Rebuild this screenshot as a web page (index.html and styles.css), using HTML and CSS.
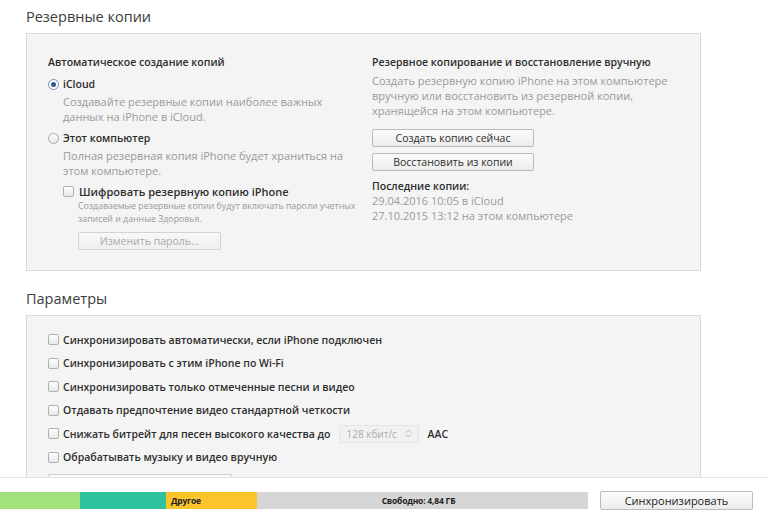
FILE: index.html
```html
<!DOCTYPE html>
<html lang="ru">
<head>
<meta charset="utf-8">
<title>Резервные копии</title>
<link rel="stylesheet" href="styles.css">
</head>
<body>
<div class="main">
  <h2 class="section-title">Резервные копии</h2>
  <div class="panel panel-backup">
    <div class="col col-left">
      <div class="label strong">Автоматическое создание копий</div>
      <div class="opt-row"><span class="radio checked"></span><span class="strong">iCloud</span></div>
      <div class="desc indent">Создавайте резервные копии наиболее важных<br>данных на iPhone в iCloud.</div>
      <div class="opt-row row2"><span class="radio"></span><span class="strong">Этот компьютер</span></div>
      <div class="desc indent">Полная резервная копия iPhone будет храниться на<br>этом компьютере.</div>
      <div class="opt-row row3 indent"><span class="checkbox"></span><span class="strong big">Шифровать резервную копию iPhone</span></div>
      <div class="small-desc">Создаваемые резервные копии будут включать пароли учетных<br>записей и данные Здоровья.</div>
      <button class="btn btn-pass" disabled>Изменить пароль...</button>
    </div>
    <div class="col col-right">
      <div class="label strong">Резервное копирование и восстановление вручную</div>
      <div class="desc r-desc">Создать резервную копию iPhone на этом компьютере<br>вручную или восстановить из резервной копии,<br>хранящейся на этом компьютере.</div>
      <button class="btn btn-wide b1">Создать копию сейчас</button>
      <button class="btn btn-wide b2">Восстановить из копии</button>
      <div class="label strong last">Последние копии:</div>
      <div class="desc dates">29.04.2016 10:05 в iCloud<br>27.10.2015 13:12 на этом компьютере</div>
    </div>
  </div>

  <h2 class="section-title t2">Параметры</h2>
  <div class="panel panel-params">
    <div class="p-row"><span class="checkbox"></span><span class="strong">Синхронизировать автоматически, если iPhone подключен</span></div>
    <div class="p-row"><span class="checkbox"></span><span class="strong">Синхронизировать с этим iPhone по Wi-Fi</span></div>
    <div class="p-row"><span class="checkbox"></span><span class="strong">Синхронизировать только отмеченные песни и видео</span></div>
    <div class="p-row"><span class="checkbox"></span><span class="strong">Отдавать предпочтение видео стандартной четкости</span></div>
    <div class="p-row"><span class="checkbox"></span><span class="strong">Снижать битрейт для песен высокого качества до</span>
      <span class="select">128 кбит/с<svg class="updown" width="7" height="9" viewBox="0 0 7 9"><path d="M1 3.5 L3.5 1 L6 3.5 M1 5.5 L3.5 8 L6 5.5" fill="none" stroke="#b5b5b5" stroke-width="1"/></svg></span>
      <span class="strong aac">AAC</span></div>
    <div class="p-row"><span class="checkbox"></span><span class="strong">Обрабатывать музыку и видео вручную</span></div>
    <div class="p-row last-row"><button class="btn btn-reset">&nbsp;</button></div>
  </div>
</div>
<div class="footer">
  <div class="storage">
    <div class="seg seg-green"></div>
    <div class="seg seg-teal"></div>
    <div class="seg seg-yellow">Другое</div>
    <div class="seg seg-free">Свободно: 4,84 ГБ</div>
  </div>
  <button class="btn btn-sync">Синхронизировать</button>
</div>
</body>
</html>
```

FILE: styles.css
```css
* { box-sizing: border-box; }
html, body { margin: 0; padding: 0; }
body {
  width: 768px;
  height: 519px;
  overflow: hidden;
  background: #fff;
  font-family: "Open Sans", "Noto Sans", sans-serif;
  color: #333;
  display: flex;
  flex-direction: column;
}
.main {
  height: 477px;
  overflow: hidden;
  flex: none;
}
.section-title {
  margin: 0;
  padding: 7px 0 0 26px;
  height: 33px;
  font-size: 14.5px;
  font-weight: 400;
  line-height: 20px;
  color: #3a3a3a;
}
.section-title.t2 {
  margin-top: 0;
  height: 44px;
  padding-top: 18px;
}
.panel {
  margin-left: 26px;
  width: 675px;
  background: #f4f4f4;
  border: 1px solid #d9d9d9;
}
.panel-backup {
  height: 238px;
  display: flex;
  padding: 21px 0 0 21px;
}
.col-left { width: 324px; }
.col-right { flex: 1; }
.strong {
  font-weight: 600;
  font-size: 10.5px;
  color: #2e2e2e;
}
.strong.big { font-size: 11px; }
.label { line-height: 15px; }
.opt-row {
  display: flex;
  align-items: center;
  height: 16px;
  margin-top: 6px;
  gap: 4px;
}
.opt-row.row2 { margin-top: 6px; }
.opt-row.row3 { margin-top: 5px; gap: 5px; }
.indent { margin-left: 15px; }
.desc {
  font-size: 11px;
  line-height: 15px;
  color: #9a9a9a;
  margin-top: 2px;
}
.small-desc {
  margin-left: 30px;
  margin-top: 1px;
  font-size: 8.8px;
  line-height: 13px;
  color: #9a9a9a;
}
.radio {
  width: 11px;
  height: 11px;
  border-radius: 50%;
  border: 1px solid #a9a9a9;
  background: linear-gradient(#fdfdfd, #e9e9e9);
  flex: none;
  position: relative;
}
.radio.checked {
  border-color: #6f8fbf;
  background: #fff;
}
.radio.checked::after {
  content: "";
  position: absolute;
  left: 2px; top: 2px;
  width: 5px; height: 5px;
  border-radius: 50%;
  background: #2e5a9c;
}
.checkbox {
  width: 11px;
  height: 11px;
  border: 1px solid #b0b0b0;
  border-radius: 2px;
  background: linear-gradient(#fdfdfd, #e8e8e8);
  flex: none;
}
.btn {
  font-family: "Open Sans", "Noto Sans", sans-serif;
  font-size: 10.5px;
  color: #2e2e2e;
  background: linear-gradient(#fcfcfc, #ececec);
  border: 1px solid #b9b9b9;
  border-radius: 2px;
  padding: 0;
  display: flex;
  align-items: center;
  justify-content: center;
  height: 18px;
  line-height: 16px;
}
.btn-pass {
  margin: 6px 0 0 30px;
  width: 143px;
  color: #a9a9a9;
  border-color: #d3d3d3;
  background: linear-gradient(#f8f8f8, #efefef);
}
.r-desc { margin-top: 3px; }
.btn-wide { width: 162px; }
.b1 { margin-top: 11px; }
.b2 { margin-top: 6px; }
.label.last { margin-top: 8px; }
.dates { margin-top: -1px; }
.panel-params {
  height: 200px;
  padding: 12px 0 0 21px;
}
.p-row {
  height: 23.5px;
  display: flex;
  align-items: center;
  gap: 4px;
}
.p-row.last-row {
  align-items: flex-start;
  padding-top: 5px;
}
.select {
  margin-left: 4px;
  width: 80px;
  height: 18px;
  border: 1px solid #e4e4e4;
  border-radius: 2px;
  background: #f1f1f1;
  font-size: 10px;
  color: #ababab;
  display: flex;
  align-items: center;
  justify-content: space-between;
  padding: 0 6px 0 7px;
}
.aac { margin-left: 5px; }
.btn-reset {
  width: 184px;
  border-color: #cfcfcf;
}
.footer {
  flex: 1;
  border-top: 1px solid #e3e3e3;
  background: #fff;
  display: flex;
  align-items: flex-start;
  padding-top: 14px;
}
.storage {
  display: flex;
  width: 588px;
  height: 17px;
  background: #d6d6d6;
}
.seg {
  height: 17px;
  font-size: 8.5px;
  font-weight: 700;
  color: #222;
  line-height: 17px;
  letter-spacing: -0.2px;
}
.seg-green { width: 80px; background: #a2e27c; }
.seg-teal { width: 86px; background: #2ec39f; }
.seg-yellow { width: 91px; background: #fcc42b; padding-left: 5px; }
.seg-free { flex: 1; background: #d6d6d6; text-align: center; padding-right: 8px; }
.btn-sync {
  margin-left: 12px;
  margin-top: -1px;
  width: 153px;
  height: 19px;
  font-size: 11px;
  color: #222;
  border-color: #bcbcbc;
}
```
